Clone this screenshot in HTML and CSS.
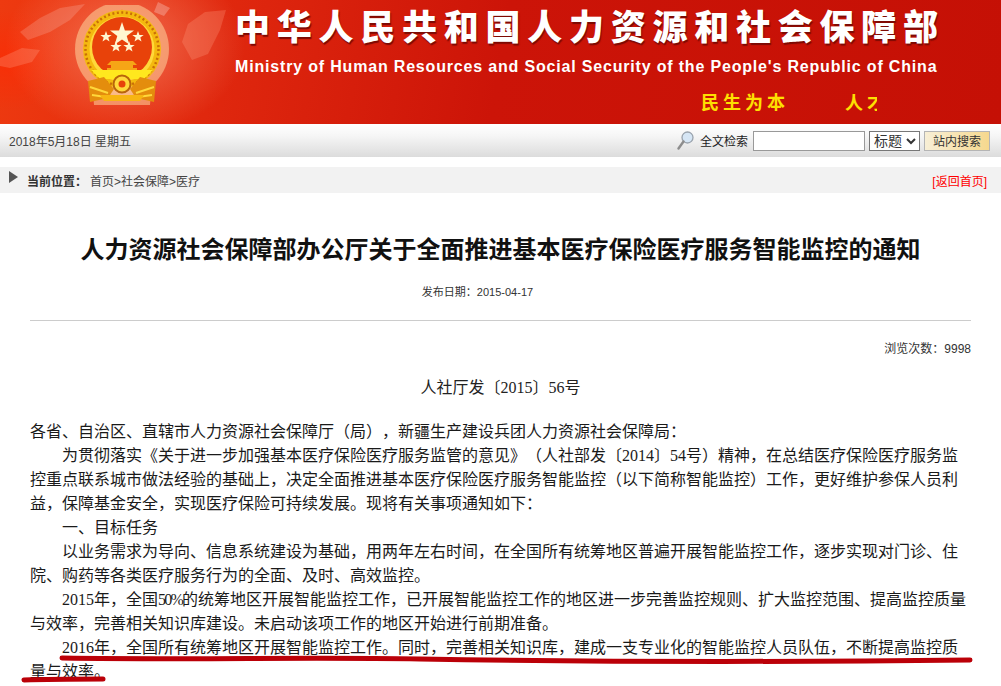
FILE: index.html
```html
<!DOCTYPE html>
<html lang="zh-CN">
  <head>
    <meta charset="UTF-8" />
    <title>人力资源社会保障部办公厅关于全面推进基本医疗保险医疗服务智能监控的通知</title>
    <link rel="stylesheet" href="styles.css">
  </head>
  <body>
    <header class="banner">
      <svg class="banner-map" width="235" height="124" viewBox="0 0 235 124">
        <path d="M40 18 60 8 85 4 70 20 50 32 28 40 20 32Z" fill="#fff" opacity="0.16"/>
        <path d="M0 58 22 48 40 50 32 62 10 68 0 66Z" fill="#ff9d80" opacity="0.3"/>
        <path d="M188 24 205 12 226 10 220 30 208 54 192 60 182 42Z" fill="#ff9d80" opacity="0.28"/>
        <path d="M158 2 170 8 164 16 154 12Z" fill="#fff" opacity="0.25"/>
      </svg>
      <svg class="emblem" width="96" height="104" viewBox="0 0 96 104">
        <circle cx="48" cy="44" r="47" fill="#ffdfa8" opacity="0.5"/>
        <path d="M18 76H78L76 100H20Z" fill="#ffdfa8" opacity="0.5"/>
        <path d="M48 4 45 12H51Z" fill="#e7a012"/>
        <circle cx="48" cy="44" r="39" fill="#f4b90f"/>
        <circle cx="48" cy="44" r="36.5" fill="none" stroke="#c96f07" stroke-width="2.5" stroke-dasharray="2 2.5"/>
        <circle cx="48" cy="44" r="32.5" fill="#ffd83a"/>
        <circle cx="48" cy="42" r="30" fill="#e8420a"/>
        <polygon points="48,17 50.9,25.6 60,25.6 52.7,31 55.3,39.6 48,34.5 40.7,39.6 43.3,31 36,25.6 45.1,25.6" fill="#fff6d0"/>
        <polygon points="32,26 33.4,30 37.7,30 34.3,32.5 35.5,36.6 32,34.2 28.5,36.6 29.7,32.5 26.3,30 30.6,30" fill="#fff6d0"/>
        <polygon points="64,26 65.4,30 69.7,30 66.3,32.5 67.5,36.6 64,34.2 60.5,36.6 61.7,32.5 58.3,30 62.6,30" fill="#fff6d0"/>
        <polygon points="42,36 43.4,40 47.7,40 44.3,42.5 45.5,46.6 42,44.2 38.5,46.6 39.7,42.5 36.3,40 40.6,40" fill="#fff6d0"/>
        <polygon points="55,36 56.4,40 60.7,40 57.3,42.5 58.5,46.6 55,44.2 51.5,46.6 52.7,42.5 49.3,40 53.6,40" fill="#fff6d0"/>
        <path d="M37 56H59L63 60H59V63H63V66H33V63H37V60H33Z" fill="#f6a516"/>
        <path d="M17 65H79L70 74H26Z" fill="#ffe81e"/>
        <path d="M14 76 30 72 40 84 34 93 16 97Z" fill="#e48d0d"/>
        <path d="M82 76 66 72 56 84 62 93 80 97Z" fill="#e48d0d"/>
        <path d="M16 82 34 88M80 82 62 88M18 90 32 92M78 90 64 92" stroke="#ffd83a" stroke-width="2"/>
        <circle cx="48" cy="79" r="8.5" fill="#ffd83a" stroke="#b9650a" stroke-width="2"/>
        <circle cx="48" cy="79" r="3.5" fill="#e8420a"/>
        <path d="M26 90H70L66 96H30Z" fill="#f7b512"/>
      </svg>
      <div class="banner-titles">
        <div class="cn-name">中华人民共和国人力资源和社会保障部</div>
        <div class="en-name">Ministry of Human Resources and Social Security of the People's Republic of China</div>
        <div class="slogan-box">
          <div class="slogans"><span>民生为本</span><span>人才优先</span></div>
        </div>
      </div>
    </header>

    <div class="toolbar">
      <span class="today">2018年5月18日 星期五</span>
      <form class="search">
        <svg class="search-icon" width="17" height="19" viewBox="0 0 17 19">
          <circle cx="10.5" cy="6.5" r="5.5" fill="#d6e6f5" stroke="#9aa3ad" stroke-width="1.3"/>
          <path d="M6.5 10.5 1.5 17.5" stroke="#8d8d8d" stroke-width="2.4" stroke-linecap="round"/>
        </svg>
        <label class="search-label" for="kw">全文检索</label>
        <input class="search-input" id="kw" type="text" />
        <select class="search-type"><option>标题</option></select>
        <button class="search-btn" type="button">站内搜索</button>
      </form>
    </div>

    <div class="crumbs">
      <span class="crumbs-arrow"></span>
      <span class="crumbs-label">当前位置：</span>
      <span class="crumbs-path">首页&gt;社会保障&gt;医疗</span>
      <a class="crumbs-back" href="#">[返回首页]</a>
    </div>

    <main class="article">
      <h1 class="article-title">人力资源社会保障部办公厅关于全面推进基本医疗保险医疗服务智能监控的通知</h1>
      <div class="article-date">发布日期：2015-04-17</div>
      <div class="article-views">浏览次数：9998</div>
      <div class="doc-no">人社厅发〔2015〕56号</div>
      <div class="article-body">
        <p class="flush">各省、自治区、直辖市人力资源社会保障厅（局），新疆生产建设兵团人力资源社会保障局：</p>
        <p>为贯彻落实《关于进一步加强基本医疗保险医疗服务监管的意见》（人社部发〔2014〕54号）精神，在总结医疗保险医疗服务监控重点联系城市做法经验的基础上，决定全面推进基本医疗保险医疗服务智能监控（以下简称智能监控）工作，更好维护参保人员利益，保障基金安全，实现医疗保险可持续发展。现将有关事项通知如下：</p>
        <p>一、目标任务</p>
        <p>以业务需求为导向、信息系统建设为基础，用两年左右时间，在全国所有统筹地区普遍开展智能监控工作，逐步实现对门诊、住院、购药等各类医疗服务行为的全面、及时、高效监控。</p>
        <p>2015年，全国<span class="half">50%</span>的统筹地区开展智能监控工作，已开展智能监控工作的地区进一步完善监控规则、扩大监控范围、提高监控质量与效率，完善相关知识库建设。未启动该项工作的地区开始进行前期准备。</p>
        <p>2016年，全国所有统筹地区开展智能监控工作。同时，完善相关知识库，建成一支专业化的智能监控人员队伍，不断提高监控质量与效率。</p>
      </div>
    </main>

    <svg class="marker" width="1001" height="686" viewBox="0 0 1001 686">
      <path d="M62 658C200 660 300 657 420 659S700 663 970 660" />
      <path d="M24 680C50 679 80 679 103 679" />
    </svg>
  </body>
</html>
```

FILE: styles.css
```css
html,
body {
  height: 686px;
  overflow: hidden;
}
body {
  margin: 0;
  position: relative;
  background: white;
  color: #222;
  font-family: "Liberation Sans", "Noto Sans CJK SC", sans-serif;
  text-spacing-trim: space-all;
}
.banner {
  position: relative;
  height: 124px;
  display: flex;
  overflow: hidden;
  background:
    radial-gradient(ellipse 120px 90px at 125px 45px, rgba(255, 170, 140, 0.5), transparent),
    radial-gradient(ellipse 60px 50px at 10px 60px, rgba(255, 40, 0, 0.6), transparent),
    linear-gradient(100deg, #ee3a10 0, #e0280e 22%, #cc1408 50%, #c51005 100%);
}
.banner-map {
  position: absolute;
  left: 0;
  top: 0;
}
.emblem {
  position: absolute;
  left: 74px;
  top: 5px;
}
.banner-titles {
  margin-left: 235px;
  width: 766px;
}
.cn-name {
  font-family: "Noto Sans CJK SC", sans-serif;
  font-weight: 900;
  font-size: 35px;
  letter-spacing: 6.75px;
  line-height: 38px;
  margin-top: 6px;
  color: white;
  white-space: nowrap;
  text-shadow: 1px 2px 1px #7d0a04;
}
.en-name {
  font-weight: bold;
  font-size: 16px;
  letter-spacing: 0.82px;
  line-height: 20px;
  margin-top: 13px;
  color: white;
  white-space: nowrap;
}
.slogan-box {
  width: 176px;
  margin: 12px 0 0 466px;
  overflow: hidden;
}
.slogans {
  display: flex;
  gap: 56px;
  font-family: "Noto Sans CJK SC", sans-serif;
  font-weight: bold;
  font-size: 18px;
  letter-spacing: 4px;
  line-height: 24px;
  color: #fde001;
  white-space: nowrap;
}
.toolbar {
  height: 33px;
  display: flex;
  align-items: center;
  justify-content: space-between;
  padding: 0 11px 0 9px;
  background: linear-gradient(#fff 0, #f6f6f6 35%, #dcdcdc 100%);
}
.today {
  font-size: 12px;
  color: #444;
}
.search {
  display: flex;
  align-items: center;
}
.search-icon {
  margin-right: 6px;
}
.search-label {
  font-size: 12px;
  color: #222;
  margin-right: 5px;
}
.search-input {
  width: 108px;
  height: 16px;
  padding: 1px;
  border: 1px solid #999;
  background: white;
  margin-right: 4px;
}
.search-type {
  width: 51px;
  height: 20px;
  font-family: inherit;
  font-size: 14px;
  border: 1px solid #777;
  background: white;
  color: #333;
  margin-right: 4px;
  padding: 0;
}
.search-btn {
  width: 66px;
  height: 20px;
  padding: 0;
  font-family: inherit;
  font-size: 12px;
  color: #333;
  border: 1px solid #b5b5b5;
  background: linear-gradient(90deg, #f8efd6, #f6d88e);
}
.crumbs {
  height: 26px;
  margin-top: 10px;
  display: flex;
  align-items: center;
  padding: 0 14px 0 9px;
  background: #f2f2f2;
  font-size: 12px;
}
.crumbs-arrow {
  width: 0;
  height: 0;
  margin: -6px 9px 0 0;
  border-left: 9px solid #555;
  border-top: 6px solid transparent;
  border-bottom: 6px solid transparent;
}
.crumbs-label {
  font-weight: bold;
  color: #333;
  margin-right: 3px;
}
.crumbs-path {
  color: #444;
}
.crumbs-back {
  margin-left: auto;
  color: #f00;
  text-decoration: none;
}
.article {
  padding: 0 30px;
}
.article-title {
  margin: 0;
  padding-top: 38px;
  font-family: "Noto Sans CJK SC", sans-serif;
  font-size: 24px;
  font-weight: bold;
  line-height: 34px;
  color: #111;
  text-align: center;
  white-space: nowrap;
}
.article-date {
  margin-top: 19px;
  padding: 0 46px 20px 0;
  border-bottom: 1px solid #ccc;
  font-size: 11px;
  line-height: 16px;
  color: #333;
  text-align: center;
}
.article-views {
  margin-top: 20px;
  font-size: 12px;
  line-height: 16px;
  color: #333;
  text-align: right;
}
.doc-no {
  margin-top: 19px;
  font-family: "Liberation Serif", "Noto Sans CJK SC", serif;
  font-size: 16px;
  line-height: 24px;
  color: #222;
  text-align: center;
}
.article-body {
  margin-top: 20px;
  font-family: "Liberation Serif", "Noto Sans CJK SC", serif;
  font-size: 16px;
  line-height: 24px;
  color: #1a1a1a;
}
.article-body p {
  margin: 0;
  text-indent: 32px;
}
.article-body .flush {
  text-indent: 0;
}
.half {
  letter-spacing: -1.8px;
}
.marker {
  position: absolute;
  left: 0;
  top: 0;
  pointer-events: none;
}
.marker path {
  fill: none;
  stroke: #bb0008;
  stroke-width: 5;
  stroke-linecap: round;
}
```
